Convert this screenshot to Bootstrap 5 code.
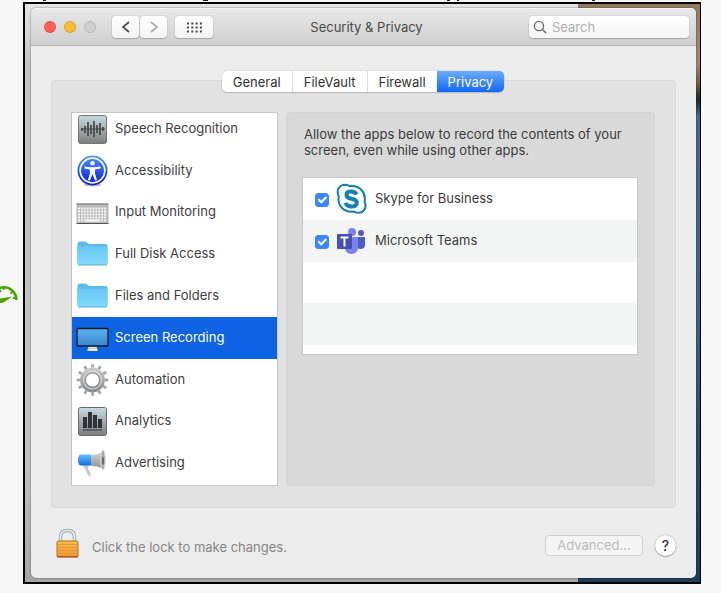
<!DOCTYPE html>
<html lang="en">
<head>
<meta charset="utf-8">
<meta name="viewport" content="width=device-width, initial-scale=1">
<title>Security &amp; Privacy</title>
<link href="https://cdn.jsdelivr.net/npm/bootstrap@5.3.0/dist/css/bootstrap.min.css" rel="stylesheet">
<style>
body{background:#f7f7f7;font-family:Inter,"Liberation Sans",sans-serif;font-size:13px;line-height:16px;color:#3c3c3c}
.page-wrap{padding:2px 20px 9px 23px}
.prev-line{position:absolute;left:0;top:0}
.gauge{position:absolute;left:0;top:281px}
.desktop{border:2px solid #000;border-right-width:1px;padding:4px 4px 4px 6px;
 background:linear-gradient(180deg,#8f7c62 0,#a08a6c 60px,#6b5c4a 80px,#20262c 96px,#46688a 112px,#3f6384 300px,#2d506f 420px,#1c3c58 100%) right/122px 100% no-repeat,
 linear-gradient(180deg,#e6e6e6 0,#c4c4c4 60px,#c0c0c0 80%,#a6a6a6 100%)}
.win{background:#ececec;border-radius:5px;box-shadow:0 0 2px rgba(0,0,0,.55);overflow:hidden}
.titlebar{display:grid;grid-template-columns:1fr auto 1fr;align-items:center;height:38px;padding:0 7px 0 13px;background:linear-gradient(#e8e8e8,#cecece);border-bottom:1px solid #b3b3b3;border-top:1px solid #f4f4f4}
.win-title{color:#4a4a4a}
.light{width:12px;height:12px;border-radius:50%;border:1px solid #0002;padding:0}
.light-r{background:#fe5f57}.light-y{background:#febc2e}.light-g{background:#cfcfcf;border-color:#b9b9b9}
.tool{height:22px;padding:0;border:0;border-radius:4px;background:linear-gradient(#fff,#f3f3f3);box-shadow:0 0 1px #888,0 1px 1px #aaa;display:flex;align-items:center;justify-content:center}
.tool-nav{width:27px}.tool-grid{width:38px}
.search{width:160px;height:22px;border-radius:4px;background:linear-gradient(#fff,#f5f5f5);box-shadow:0 0 1px #888,0 1px 1px #aaa;padding:0 4px}
.search input{border:0;background:none;outline:0;min-width:0;padding:0 0 0 5px;font-size:13px;line-height:16px}
.search input::placeholder{color:#b0b0b0;opacity:1}
.main{padding:34px 20px 0}
.groupbox{background:#e2e2e2;border:1px solid #dadada;border-radius:4px;padding:0 20px 21px 19px}
.tabs{margin:-10px 0 20px}
.tabs button{height:21px;border:0;border-left:1px solid #ddd;background:#fff;padding:0 11px;line-height:20px;color:#333}
.tabs .seg{border-radius:5px;overflow:hidden;box-shadow:0 0 1px #888,0 1px 1px #bbb}
.tabs button:first-child{border-left:0}
.tabs button.on{background:linear-gradient(#6bacfa,#0f68fa);color:#fff;border-left:0}
.side{width:207px;flex:none;height:374px;border:1px solid #c6c6c6;background:#fff;overflow:hidden}
.side .rows{height:376px;margin:-5px 0 0}
.side a{color:#404040;text-decoration:none;flex:1 1 0;padding:0 0 0 5px;gap:7px}
.side a svg{flex:none}
.side a span{padding-bottom:2px}
.side a.on{background:#0d63e1;color:#fff}
.pane{background:#d9d9d9;border:1px solid #d3d3d3;border-radius:4px;margin-left:8px;padding:13px 16px 0 15px}
.pane p{padding:0 2px;margin:0 0 19px}
.apps{display:grid;grid-template-rows:repeat(4,1fr) 9px;height:178px;background:#fff;border:1px solid #c6c6c6}
.apps>:nth-child(even){background:#f3f5f5}
.apps label{padding:0 0 0 12px}
.apps label span{padding-bottom:1px}
.apps .form-check-input{width:14px;height:14px;margin:2px 7px 0 0;border-radius:3px;float:none;flex:none}
.apps .form-check-input:checked{background-color:#3b87fc;border-color:#3b87fc;background-size:15px}
.apps svg{margin-right:8px}
.foot{padding:20px 20px 19px 24px}
.foot .note{color:#858585;padding:6px 0 0 12px}
.adv{width:98px;height:21px;border:1px solid #d2d2d2;border-radius:4px;background:#f4f4f4;color:#bcbcbc;padding:0;line-height:19px}
.foot .adv,.foot .help{margin-top:3px}
.help{width:21px;height:21px;border:0;border-radius:50%;background:#fff;box-shadow:0 0 1px #777,0 1px 1px #aaa;padding:0;margin-left:12px;font-weight:500;font-size:14px;line-height:21px;color:#333}
</style>
</head>
<body>
<svg class="prev-line" width="640" height="1" aria-hidden="true"><path d="M43 0h3v1h-3zM203 0h5v1h-5zM447 0h3v1h-3zM457 0h2v1h-2zM592 0h3v1h-3z" fill="#222"/></svg>
<svg class="gauge" width="20" height="24" aria-hidden="true"><path d="M-9 19A12.700 12.700 0 0 1 16.400 19" fill="none" stroke="#4ba50a" stroke-width="2.600"/><path d="M3.700 6v3M12.500 10.500l-2 2M-1 8l2 3M16 17h-3" stroke="#4ba50a" stroke-width="1.800"/><path d="M0 17.500 12.500 15.500 5 20.500Q2 22.500 0 22Z" fill="#4ba50a"/></svg>
<div class="page-wrap">
<div class="desktop">
<main class="win">
 <header class="titlebar">
  <div class="d-flex align-items-center">
   <div class="d-flex gap-2"><button class="light light-r" aria-label="Close"></button><button class="light light-y" aria-label="Minimize"></button><button class="light light-g" aria-label="Zoom"></button></div>
   <div class="d-flex ms-3" style="gap:1px">
    <button class="tool tool-nav" aria-label="Back"><svg width="10" height="14"><path d="M8 2 2 7l6 5" fill="none" stroke="#4d4d4d" stroke-width="1.700"/></svg></button>
    <button class="tool tool-nav" aria-label="Forward"><svg width="10" height="14"><path d="m2 2 6 5-6 5" fill="none" stroke="#aaa" stroke-width="1.700"/></svg></button>
   </div>
   <button class="tool tool-grid ms-2" aria-label="Show All"><svg width="15" height="11"><path d="M0 1.500h15M0 5.500h15M0 9.500h15" stroke="#4a4a4a" stroke-width="2" stroke-dasharray="2 2.300"/></svg></button>
  </div>
  <div class="win-title">Security &amp; Privacy</div>
  <label class="search d-flex align-items-center ms-auto"><svg width="14" height="14" class="flex-shrink-0"><circle cx="6" cy="6" r="4.600" fill="none" stroke="#666" stroke-width="1.300"/><path d="m9.500 9.500 3.500 3.500" stroke="#666" stroke-width="1.500"/></svg><input class="flex-fill" type="text" placeholder="Search" aria-label="Search"></label>
 </header>
 <div class="main">
  <section class="groupbox">
   <div class="tabs d-flex justify-content-center"><div class="seg d-flex" role="tablist"><button role="tab">General</button><button role="tab">FileVault</button><button role="tab">Firewall</button><button role="tab" class="on" aria-selected="true">Privacy</button></div></div>
   <div class="d-flex">
    <nav class="side"><div class="rows d-flex flex-column">
     <a href="#" class="d-flex align-items-center"><svg width="31" height="32"><defs><linearGradient id="steel" x2="0" y2="1"><stop stop-color="#c8dae2"/><stop offset="1" stop-color="#7d7d7b"/></linearGradient></defs><rect x="1.500" y="2.500" width="28" height="28" rx="2" fill="url(#steel)" stroke="#72777b"/><path d="M4 16h24" stroke="#444"/><path d="M5 15v3M8 13v7M11 9v14M14 12v9M17 8v16M20 12v8M23 10v12M26 14v4" stroke="#3c4145" stroke-width="1.600"/></svg><span>Speech Recognition</span></a>
     <a href="#" class="d-flex align-items-center"><svg width="31" height="32"><defs><linearGradient id="blue" x2="0" y2="1"><stop stop-color="#4b98f8"/><stop offset="1" stop-color="#0719dc"/></linearGradient></defs><ellipse cx="15.500" cy="30" rx="9" ry="1.500" fill="#bbb"/><circle cx="15.500" cy="15.500" r="15" fill="url(#blue)"/><circle cx="15.500" cy="15.500" r="12.300" fill="none" stroke="#fff" stroke-width="1.700"/><circle cx="15.500" cy="8.300" r="2.200" fill="#fff"/><path d="M7.500 11.500q8 1.500 16 0v2l-5.500 1v4l2 6.500-2 .6-2.300-6h-.6l-2.200 6-2-.6 2-6.500v-4l-5.400-1z" fill="#fff"/></svg><span>Accessibility</span></a>
     <a href="#" class="d-flex align-items-center"><svg width="31" height="32" style="overflow:visible"><rect x="-.5" y="7.500" width="32" height="20" rx="1" fill="#b9b9b9"/><path d="M-.5 8h32" stroke="#777"/><path d="M-.5 27.500h32" stroke="#555"/><path d="M1 12.500h29M1 15.500h29M1 18.500h29M1 21.500h29M1 24.500h29" stroke="#f8f8f8" stroke-width="2" stroke-dasharray="2 .9"/><path d="M9 24.500h13" stroke="#f8f8f8" stroke-width="2"/></svg><span>Input Monitoring</span></a>
     <a href="#" class="d-flex align-items-center"><svg width="31" height="32"><defs><linearGradient id="fold" x2="0" y2="1"><stop stop-color="#67c9f5"/><stop offset="1" stop-color="#83d8fb"/></linearGradient></defs><path d="M.5 6q0-2.500 2-2.500h6q1 0 2 1.500l1 1h17q2 0 2 2v18h-30z" fill="#58bbe8"/><path d="M.5 8.500h30V25q0 2-2 2h-26q-2 0-2-2z" fill="url(#fold)"/><path d="M1 27h29" stroke="#58aecf"/></svg><span>Full Disk Access</span></a>
     <a href="#" class="d-flex align-items-center"><svg width="31" height="32"><path d="M.5 6q0-2.500 2-2.500h6q1 0 2 1.500l1 1h17q2 0 2 2v18h-30z" fill="#58bbe8"/><path d="M.5 8.500h30V25q0 2-2 2h-26q-2 0-2-2z" fill="url(#fold)"/><path d="M1 27h29" stroke="#58aecf"/></svg><span>Files and Folders</span></a>
     <a href="#" class="on d-flex align-items-center" aria-current="page"><svg width="31" height="32" style="overflow:visible"><defs><linearGradient id="scr" x2="0" y2="1"><stop stop-color="#5eb0ef"/><stop offset="1" stop-color="#3b87cd"/></linearGradient></defs><path d="M11.500 24h8l1 5h-10z" fill="#d8d8d8"/><path d="M10.500 28h10" stroke="#f8f8f8"/><rect x="0" y="6.500" width="31" height="17.500" rx="1" fill="url(#scr)" stroke="#0c1a2c" stroke-width="1.300"/></svg><span>Screen Recording</span></a>
     <a href="#" class="d-flex align-items-center"><svg width="31" height="32" style="overflow:visible"><defs><linearGradient id="gear" x2="0" y2="1"><stop stop-color="#c6c8ca"/><stop offset="1" stop-color="#8d9093"/></linearGradient></defs><circle cx="15.500" cy="16" r="14" fill="none" stroke="#a2a5a8" stroke-width="3.600" pathLength="48" stroke-dasharray="1.500 2.500" stroke-dashoffset=".75"/><circle cx="15.500" cy="16" r="9.700" fill="none" stroke="url(#gear)" stroke-width="5.500"/><circle cx="15.500" cy="16" r="7" fill="none" stroke="#888"/><circle cx="15.500" cy="16" r="9" fill="none" stroke="#dadcde"/></svg><span>Automation</span></a>
     <a href="#" class="d-flex align-items-center"><svg width="31" height="32"><rect x="1.500" y="2.500" width="28" height="28" rx="2" fill="url(#steel)" stroke="#666b70"/><path d="M6 12h4v11H6zM11 7h4v16h-4zM16 10h4v13h-4zM21 14h4v9h-4zM6 24.500h19v1H6z" fill="#303234"/></svg><span>Analytics</span></a>
     <a href="#" class="d-flex align-items-center"><svg width="31" height="32"><defs><linearGradient id="cone" x2="0" y2="1"><stop stop-color="#ddd"/><stop offset=".5" stop-color="#b4b4b4"/><stop offset="1" stop-color="#888"/></linearGradient><linearGradient id="horn" x2="0" y2="1"><stop stop-color="#63c2fb"/><stop offset="1" stop-color="#0d6ee5"/></linearGradient></defs><path d="m6 18 5 10q1 2 3 1l-1-4-2-3 1-4z" fill="#c8c8c8"/><path d="M14 8q8 0 12-4l1-1v20q-4-4-13-4z" fill="url(#cone)"/><ellipse cx="26" cy="13" rx="2.300" ry="10" fill="#aaa" stroke="#ddd"/><ellipse cx="26" cy="14" rx="1" ry="4" fill="#666"/><path d="M4 7.500h10v11H4q-3 0-3-5.500t3-5.500" fill="url(#horn)"/></svg><span>Advertising</span></a>
    </div></nav>
    <section class="pane flex-fill">
     <p>Allow the apps below to record the contents of your screen, even while using other apps.</p>
     <div class="apps">
      <label class="d-flex align-items-center"><input class="form-check-input" type="checkbox" checked><svg width="31" height="32"><path d="M9 1.800q3 0 4.500 1.300Q21 2 25.500 7t3 12q1.700 3 .5 6.500-2 4.500-7 4.300-2 0-4-1.200Q10.500 29.500 6 25T2.800 13.500Q1 10 2 6.500 4 2 9 1.800Z" fill="#fff" stroke="#147fb0" stroke-width="2"/><path d="M20.500 11.500q-1.500-3-5.200-3-4.800 0-4.800 3.400 0 2.800 5 3.800 5.300 1 5.300 4 0 3.800-5.300 3.800-4.500 0-6-3.500" fill="none" stroke="#147fb0" stroke-width="4"/></svg><span>Skype for Business</span></label>
      <label class="d-flex align-items-center"><input class="form-check-input" type="checkbox" checked><svg width="31" height="32"><circle cx="16" cy="7" r="4" fill="#7b83eb"/><circle cx="25" cy="8" r="3" fill="#5059c9"/><path d="M20 12h9v8q0 4-4.500 4-3 0-4.500-2z" fill="#5059c9"/><path d="M9 12h13v10q0 7-6.500 7T9 22z" fill="#7b83eb"/><rect x="1" y="9" width="15" height="15" rx="1" fill="#464eb8"/><path d="M4.500 12.500h8M8.500 12.500v9" stroke="#fff" stroke-width="2"/></svg><span>Microsoft Teams</span></label>
      <div></div><div></div><div></div>
     </div>
    </section>
   </div>
  </section>
 </div>
 <footer class="foot d-flex align-items-center">
  <svg width="25" height="31"><defs><linearGradient id="gold" x2="0" y2="1"><stop stop-color="#f9ba51"/><stop offset="1" stop-color="#ee9832"/></linearGradient></defs><path d="M5.500 14V9q0-6.500 7-6.500t7 6.500v5" fill="none" stroke="#9aa9b3" stroke-width="3.400"/><path d="M5.500 14V9q0-6.500 7-6.500t7 6.500v5" fill="none" stroke="#e4ecf0" stroke-width="1.600"/><rect x="2" y="13" width="21" height="16" rx="1" fill="url(#gold)" stroke="#b5701f"/><path d="M3 16.500h19M3 19.500h19M3 22.500h19M3 25.500h19" stroke="#dd9536" stroke-width=".8"/><path d="M2 28.800h21" stroke="#9a4d12"/></svg>
  <span class="note">Click the lock to make changes.</span>
  <button class="adv ms-auto" disabled>Advanced...</button><button class="help" aria-label="Help">?</button>
 </footer>
</main>
</div>
</div>
<script src="https://cdn.jsdelivr.net/npm/bootstrap@5.3.0/dist/js/bootstrap.bundle.min.js"></script>
</body>
</html>
